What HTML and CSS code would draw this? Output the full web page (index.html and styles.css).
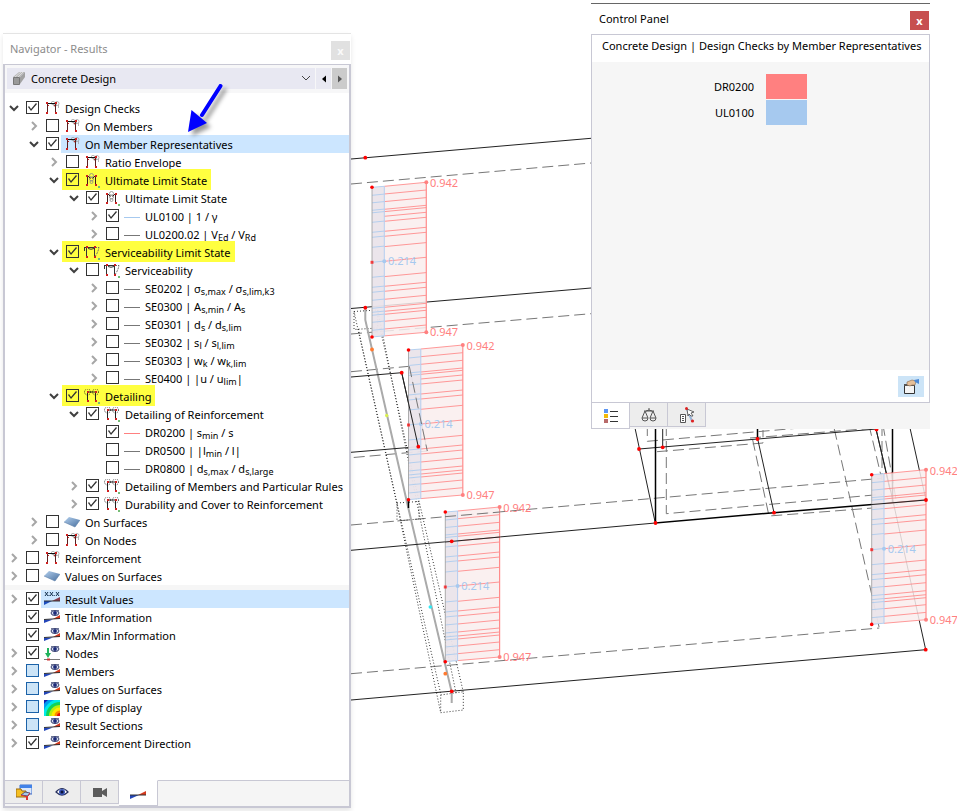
FILE: index.html
```html
<!DOCTYPE html>
<html lang="en">
<head>
<meta charset="utf-8">
<title>Concrete Design - Results</title>
<link rel="stylesheet" href="styles.css">
</head>
<body>
<svg class="defs" aria-hidden="true">
  <defs>
    <linearGradient id="g-surf" x1="0" y1="0" x2="1" y2="1"><stop offset="0" stop-color="#b4d0ee"/><stop offset="1" stop-color="#48709f"/></linearGradient>
    <symbol id="down" viewBox="0 0 12 12"><path d="M2 4l4 4 4-4" fill="none" stroke="#404040" stroke-width="2"/></symbol>
    <symbol id="right" viewBox="0 0 12 12"><path d="M4 2l4 4-4 4" fill="none" stroke="#a6a6a6" stroke-width="2"/></symbol>
    <symbol id="frame" viewBox="0 0 16 16">
      <g fill="none" stroke="#999" stroke-width=".7"><circle cx="9" cy="2" r="1.700"/><circle cx="13" cy="2.500" r="2"/><circle cx="11" cy="4" r="1.500"/><path d="M14.500 4v3"/></g>
      <path d="M3.500 13V2.500M11.500 13V2.500" fill="none" stroke="#5a2020"/><path d="M3 2.500h9" stroke="#111"/>
      <path d="M2 1h2v2H2zM11 1h2v2h-2zM2 11h2v2H2zM11 11h2v2h-2zM4 4h1v1H4zM10 4h1v1h-1z" fill="#cf2020"/>
    </symbol>
    <symbol id="uls" viewBox="0 0 16 16">
      <g fill="none" stroke="#888" stroke-width=".8"><circle cx="7.500" cy="2.500" r="2"/><circle cx="7.500" cy="6" r="2"/><circle cx="7.500" cy="9" r="1.500"/></g>
      <path d="M3.500 13V2.500l3 3M11.500 13V2.500l-3 3" fill="none" stroke="#3a1a1a"/>
      <path d="M2 2h2v2H2zM11 2h2v2h-2zM2 11h2v2H2zM11 11h2v2h-2z" fill="#cf2020"/><path d="M14 13h2v2h-2z" fill="#75bd75"/>
    </symbol>
    <symbol id="sls" viewBox="0 0 16 16">
      <path d="M0 2.500h11M2.500 3v10M10.500 3v10M.5 6V2M4 3.500q3 1.500 6 0" fill="none" stroke="#333"/><path d="M11 2.500h4q-1 5-4 9" fill="none" stroke="#666" stroke-dasharray="2 1"/>
      <path d="M2 1h2v2H2zM10 1h2v2h-2zM2 11h2v2H2zM10 11h2v2h-2z" fill="#cf2020"/><path d="M14 13h2v2h-2z" fill="#75bd75"/>
    </symbol>
    <symbol id="det" viewBox="0 0 16 16">
      <g fill="none" stroke="#111" stroke-width=".9" stroke-dasharray="1 1.200"><circle cx="3.500" cy="3" r="3"/><circle cx="11.500" cy="3" r="3"/></g>
      <path d="M3.500 13V3h8v10" fill="none" stroke="#222"/><path d="M3 2h2v2H3zM11 2h2v2h-2zM3 11h2v2H3zM11 11h2v2h-2z" fill="#cf2020"/><path d="M14 13h2v2h-2z" fill="#75bd75"/>
    </symbol>
    <symbol id="surf" viewBox="0 0 16 16"><path d="M0 7l5-5 11 3-5 7z" fill="url(#g-surf)"/><path d="M0 7l11 5 5-7" fill="none" stroke="#5d7fa8" stroke-width=".6"/></symbol>
    <symbol id="ramp" viewBox="0 0 16 16"><path d="M0 10h9L0 14z" fill="#2446b8"/><path d="M8 10l8-4v4z" fill="#d63a1e"/><path d="M0 10h16" stroke="#333"/></symbol>
    <symbol id="values" viewBox="0 0 16 16"><path d="M0 9h8L0 13z" fill="#1d4ec0"/><path d="M8 9l8-4v4z" fill="#8b3b4b"/><path d="M0 9h16" stroke="#333"/><path d="M1 0l3 4M4 0L1 4M6 0l3 4M9 0L6 4M12 0l3 4M15 0l-3 4" stroke="#15314f" stroke-width="1"/><path d="M4.500 3h1v1h-1zM9.700 3h1v1h-1z" fill="#15314f"/></symbol>
    <symbol id="eye-s" viewBox="0 0 10 8"><ellipse cx="5" cy="4" rx="4" ry="2.500" fill="#d5dbec" stroke="#313b6b"/><circle cx="5" cy="4" r="1.900" fill="#1d2b78"/><path d="M1 1.500q4-2.300 8 0" fill="none" stroke="#313b6b" stroke-width=".8"/></symbol>
    <symbol id="result" viewBox="0 0 16 16"><path d="M0 9.500h9L0 13z" fill="#2446b8"/><path d="M9 9l7-4v4z" fill="#d63a1e"/><path d="M0 9.500l16-1" stroke="#333"/><use href="#eye-s" x="6" y="-1" width="10" height="8"/></symbol>
    <symbol id="nodes" viewBox="0 0 16 16"><path d="M4 2v7" stroke="#20b35c" stroke-width="2"/><path d="M1 7l3 5 3-5z" fill="#20b35c"/><path d="M0 13.500h16" stroke="#777"/><path d="M3 12.500h3v2H3z" fill="#c33"/><use href="#eye-s" x="6" y="-1" width="10" height="8"/></symbol>
    <symbol id="rainbow" viewBox="0 0 16 16"><path d="M0 0h16v16H0z" fill="#1020b0"/><circle cx="16" cy="16" r="20" fill="#009cf0"/><circle cx="16" cy="16" r="17" fill="#00eaea"/><circle cx="16" cy="16" r="14" fill="#10d35a"/><circle cx="16" cy="16" r="11" fill="#b3ee10"/><circle cx="16" cy="16" r="8.500" fill="#ffe800"/><circle cx="16" cy="16" r="5.500" fill="#ff8a00"/><circle cx="16" cy="16" r="3" fill="#e01010"/></symbol>
    <g id="diagram">
      <path d="M0 5L54.300 0V150L0 154.700z" fill="#f9eded" fill-opacity=".85"/>
      <path d="M0 5L12.300 4V153.600L0 154.700z" fill="#e4dfe8" fill-opacity=".7"/>
      <path d="M12.300 4L54.300 0m-42 11.700l42-4m-42 11.600l42-4m-42 11.700l42-4m-42 6.300l42-4m-42 8.700l42-4m-42 9l42-4m-42 14l42-4m-42 9l42-4m-42 14.300l42-4m-42 18.700l42-4m-42 19.300l42-4m-42 13.700l42-4m-42 9l42-4m-42 12l42-4m-42 12l42-4m-42 8l42-4m-42 7l42-4m-42 11l42-4m-42 11.700l42-4" fill="none" stroke="#ff8080" stroke-width=".8"/>
      <path d="M12.300 153.600l42-3.600" stroke="#ff8080" stroke-width=".8"/>
      <path d="M0 13l12.300-1.200M0 20.500l12.300-1.200M0 28l12.300-1.200M0 30.500l12.300-1.200M0 40l12.300-1.200M0 50l12.300-1.200M0 55l12.300-1.200M0 65l12.300-1.200M0 80l12.300-1.200M0 95l12.300-1.200M0 105l12.300-1.200M0 110l12.300-1.200M0 118l12.300-1.200M0 126l12.300-1.200M0 130l12.300-1.200M0 133l12.300-1.200M0 140l12.300-1.200M0 148l12.300-1.200M0 154.700l12.300-1.200M0 5l12.300-1" stroke="#a6c9ef" stroke-width=".8" fill="none"/>
      <path d="M0 5v150" stroke="#999" stroke-width=".8"/><path d="M12.300 4v150" stroke="#b4cdf0"/><path d="M54.300 0v150" stroke="#ff8c8c" stroke-width="1.200"/>
      <g fill="#ff8080"><circle cx="54.300" cy="0" r="2"/><circle cx="54.300" cy="150" r="2"/><text x="58" y="5">0.942</text><text x="58" y="154">0.947</text></g>
      <g fill="#a6c9ef"><circle cx="12.300" cy="79" r="2"/><text x="16" y="83">0.214</text></g>
      <g fill="#f00"><circle cx="0" cy="5" r="1.800"/><circle cx="0" cy="154.700" r="1.800"/><path d="M-1.500 78.500h3v3h-3z" opacity=".7"/></g>
    </g>
  </defs>
</svg>

<svg class="scene" viewBox="0 0 957 811" preserveAspectRatio="xMinYMin meet" role="img" aria-label="Structural model with design check diagrams">
  <g class="dashed">
    <path d="M351 184L591 163M351 334L591 313.700M351 371.700L409.300 366.300L427.300 451L351 457.700M351 525L881.700 478.300M351 673.700L879.300 628"/>
    <path d="M647.300 425V441.300L800 428M657 451.700L763 443V430M666.300 425V513.700L881.700 494.300M752.700 440L769 516L876.700 507.700M834.300 429L879.300 628M869 425L882 480M883 425L897 505M882 425V478M750 438L876 428"/>
  </g>
  <g class="dotted">
    <path d="M354 311.500L377.700 310V328L354 329.500zM397 503L419 501.500V519L397 521zM440.700 695L463.300 691.700V710L440.700 712.700z"/>
    <path d="M354 311.500L396 500L440.700 712.700M358.300 329L397 503L441 695M377.700 310L417 503L456 693M380 328L419 501L463.300 692"/>
  </g>
  <path class="axis" d="M365.300 308V320L408.300 508L451.700 692V703"/>
  <g class="solid">
    <path d="M351 159L591 138.300M351 308.500L591 288M351 377L401.700 372.700L418.300 446.700L351 452.300M351 550.300L655.300 523M351 700L925.700 649.700"/>
    <path d="M635 428L655.300 523M639 449L876.700 429M662.700 428V447M757.700 439L774 512.700M910 428L926 500M876 429L893 501L925.700 649.700M876 429L890 490"/>
    <path class="heavy" d="M655.500 428V523L774 512.700L926 500M757.500 428V439M892.500 428V502M408.500 498V508"/>
  </g>
  <g class="diagrams">
    <use href="#diagram" x="372" y="182.300"/><use href="#diagram" x="408.500" y="345"/><use href="#diagram" x="445.300" y="507"/><use href="#diagram" x="871.700" y="469.700"/>
  </g>
  <path class="solid" d="M445 542L500 537M871 504.600L926 500M401.700 372.700L418.300 446.700"/>
  <path class="dashed" d="M409.300 366.300L427.300 451M445 516.700L500 512"/>
  <g fill="#f00">
    <circle cx="365.300" cy="157.700" r="1.900"/><circle cx="365.300" cy="307.700" r="1.900"/><circle cx="401.700" cy="372.700" r="1.900"/><circle cx="418.300" cy="446.700" r="1.900"/><circle cx="451.700" cy="541.300" r="1.900"/><circle cx="451.700" cy="691.300" r="1.900"/><circle cx="639" cy="449" r="1.900"/><circle cx="662.700" cy="447.300" r="1.900"/><circle cx="757.500" cy="439" r="1.900"/><circle cx="876.500" cy="429.500" r="1.900"/><circle cx="655.500" cy="523" r="1.900"/><circle cx="774" cy="512.700" r="1.900"/><circle cx="926" cy="500" r="1.900"/><circle cx="925.700" cy="649.700" r="1.900"/>
  </g>
  <circle cx="372" cy="349.500" r="1.900" fill="#ff7a30"/><circle cx="386.700" cy="415.500" r="1.700" fill="#d8ee50"/><circle cx="430.300" cy="607" r="1.800" fill="#30e8f4"/><circle cx="445.300" cy="673.700" r="1.900" fill="#ff7a30"/>
</svg>

<main class="desktop">
<section class="navigator">
  <header class="titlebar muted"><h2>Navigator - Results</h2><button class="close" disabled aria-label="Close navigator">x</button></header>
  <div class="nav-body">
    <div class="toolbar">
      <div class="picker">
        <svg class="icon" viewBox="0 0 16 16"><path d="M2 6l6-5h6L9 6z" fill="#b9b9b9"/><path d="M9 6l5-5v5l-5 7z" fill="#a2a2a2"/><path d="M2.500 6.500h6v7h-6z" fill="#999" stroke="#777"/><path d="M4 6l6-5M7 6l5-5" stroke="#e4e4e4" stroke-width=".8"/></svg>
        <select aria-label="Result category"><option>Concrete Design</option></select>
        <svg class="caret" viewBox="0 0 12 12"><path d="M2 4l4 4 4-4" fill="none" stroke="#444"/></svg>
      </div>
      <button class="step" aria-label="Previous"><svg viewBox="0 0 12 12"><path d="M8 2.500v7L4 6z"/></svg></button>
      <button class="step next" aria-label="Next"><svg viewBox="0 0 12 12"><path d="M4 2.500v7L8 6z" fill="#555"/></svg></button>
    </div>
    <ul class="tree">
      <li><div class="row"><button class="twist" aria-label="Collapse"><svg><use href="#down"/></svg></button><label><input type="checkbox" checked><span class="tag"><svg class="icon"><use href="#frame"/></svg>Design Checks</span></label></div>
        <ul>
          <li><div class="row"><button class="twist" aria-label="Expand"><svg><use href="#right"/></svg></button><label><input type="checkbox"><span class="tag"><svg class="icon"><use href="#frame"/></svg>On Members</span></label></div></li>
          <li><div class="row selected"><button class="twist" aria-label="Collapse"><svg><use href="#down"/></svg></button><label><input type="checkbox" checked><span class="tag"><svg class="icon"><use href="#frame"/></svg>On Member Representatives</span></label></div>
            <ul>
              <li><div class="row"><button class="twist" aria-label="Expand"><svg><use href="#right"/></svg></button><label><input type="checkbox"><span class="tag"><svg class="icon"><use href="#frame"/></svg>Ratio Envelope</span></label></div></li>
              <li><div class="row marked"><button class="twist" aria-label="Collapse"><svg><use href="#down"/></svg></button><label><input type="checkbox" checked><span class="tag"><svg class="icon"><use href="#uls"/></svg>Ultimate Limit State</span></label></div>
                <ul>
                  <li><div class="row"><button class="twist" aria-label="Collapse"><svg><use href="#down"/></svg></button><label><input type="checkbox" checked><span class="tag"><svg class="icon"><use href="#uls"/></svg>Ultimate Limit State</span></label></div>
                    <ul>
                      <li><div class="row"><button class="twist" aria-label="Expand"><svg><use href="#right"/></svg></button><label><input type="checkbox" checked><span class="tag"><i class="line blue"></i><span>UL0100 | 1 / γ</span></span></label></div></li>
                      <li><div class="row"><button class="twist" aria-label="Expand"><svg><use href="#right"/></svg></button><label><input type="checkbox"><span class="tag"><i class="line"></i><span>UL0200.02 | V<sub>Ed</sub> / V<sub>Rd</sub></span></span></label></div></li>
                    </ul></li>
                </ul></li>
              <li><div class="row marked"><button class="twist" aria-label="Collapse"><svg><use href="#down"/></svg></button><label><input type="checkbox" checked><span class="tag"><svg class="icon"><use href="#sls"/></svg>Serviceability Limit State</span></label></div>
                <ul>
                  <li><div class="row"><button class="twist" aria-label="Collapse"><svg><use href="#down"/></svg></button><label><input type="checkbox"><span class="tag"><svg class="icon"><use href="#sls"/></svg>Serviceability</span></label></div>
                    <ul>
                      <li><div class="row"><button class="twist" aria-label="Expand"><svg><use href="#right"/></svg></button><label><input type="checkbox"><span class="tag"><i class="line"></i><span>SE0202 | σ<sub>s,max</sub> / σ<sub>s,lim,k3</sub></span></span></label></div></li>
                      <li><div class="row"><button class="twist" aria-label="Expand"><svg><use href="#right"/></svg></button><label><input type="checkbox"><span class="tag"><i class="line"></i><span>SE0300 | A<sub>s,min</sub> / A<sub>s</sub></span></span></label></div></li>
                      <li><div class="row"><button class="twist" aria-label="Expand"><svg><use href="#right"/></svg></button><label><input type="checkbox"><span class="tag"><i class="line"></i><span>SE0301 | d<sub>s</sub> / d<sub>s,lim</sub></span></span></label></div></li>
                      <li><div class="row"><button class="twist" aria-label="Expand"><svg><use href="#right"/></svg></button><label><input type="checkbox"><span class="tag"><i class="line"></i><span>SE0302 | s<sub>l</sub> / s<sub>l,lim</sub></span></span></label></div></li>
                      <li><div class="row"><button class="twist" aria-label="Expand"><svg><use href="#right"/></svg></button><label><input type="checkbox"><span class="tag"><i class="line"></i><span>SE0303 | w<sub>k</sub> / w<sub>k,lim</sub></span></span></label></div></li>
                      <li><div class="row"><button class="twist" aria-label="Expand"><svg><use href="#right"/></svg></button><label><input type="checkbox"><span class="tag"><i class="line"></i><span>SE0400 | |u / u<sub>lim</sub>|</span></span></label></div></li>
                    </ul></li>
                </ul></li>
              <li><div class="row marked"><button class="twist" aria-label="Collapse"><svg><use href="#down"/></svg></button><label><input type="checkbox" checked><span class="tag"><svg class="icon"><use href="#det"/></svg>Detailing</span></label></div>
                <ul>
                  <li><div class="row"><button class="twist" aria-label="Collapse"><svg><use href="#down"/></svg></button><label><input type="checkbox" checked><span class="tag"><svg class="icon"><use href="#det"/></svg>Detailing of Reinforcement</span></label></div>
                    <ul>
                      <li><div class="row leaf"><label><input type="checkbox" checked><span class="tag"><i class="line red"></i><span>DR0200 | s<sub>min</sub> / s</span></span></label></div></li>
                      <li><div class="row leaf"><label><input type="checkbox"><span class="tag"><i class="line"></i><span>DR0500 | |l<sub>min</sub> / l|</span></span></label></div></li>
                      <li><div class="row leaf"><label><input type="checkbox"><span class="tag"><i class="line"></i><span>DR0800 | d<sub>s,max</sub> / d<sub>s,large</sub></span></span></label></div></li>
                    </ul></li>
                  <li><div class="row"><button class="twist" aria-label="Expand"><svg><use href="#right"/></svg></button><label><input type="checkbox" checked><span class="tag"><svg class="icon"><use href="#det"/></svg>Detailing of Members and Particular Rules</span></label></div></li>
                  <li><div class="row"><button class="twist" aria-label="Expand"><svg><use href="#right"/></svg></button><label><input type="checkbox" checked><span class="tag"><svg class="icon"><use href="#det"/></svg>Durability and Cover to Reinforcement</span></label></div></li>
                </ul></li>
            </ul></li>
          <li><div class="row"><button class="twist" aria-label="Expand"><svg><use href="#right"/></svg></button><label><input type="checkbox"><span class="tag"><svg class="icon"><use href="#surf"/></svg>On Surfaces</span></label></div></li>
          <li><div class="row"><button class="twist" aria-label="Expand"><svg><use href="#right"/></svg></button><label><input type="checkbox"><span class="tag"><svg class="icon"><use href="#frame"/></svg>On Nodes</span></label></div></li>
        </ul></li>
      <li><div class="row"><button class="twist" aria-label="Expand"><svg><use href="#right"/></svg></button><label><input type="checkbox"><span class="tag"><svg class="icon"><use href="#frame"/></svg>Reinforcement</span></label></div></li>
      <li><div class="row"><button class="twist" aria-label="Expand"><svg><use href="#right"/></svg></button><label><input type="checkbox"><span class="tag"><svg class="icon"><use href="#surf"/></svg>Values on Surfaces</span></label></div></li>
    </ul>
    <ul class="tree display">
      <li><div class="row selected"><button class="twist" aria-label="Expand"><svg><use href="#right"/></svg></button><label><input type="checkbox" checked><span class="tag"><svg class="icon"><use href="#values"/></svg>Result Values</span></label></div></li>
      <li><div class="row leaf"><label><input type="checkbox" checked><span class="tag"><svg class="icon"><use href="#result"/></svg>Title Information</span></label></div></li>
      <li><div class="row leaf"><label><input type="checkbox" checked><span class="tag"><svg class="icon"><use href="#result"/></svg>Max/Min Information</span></label></div></li>
      <li><div class="row"><button class="twist" aria-label="Expand"><svg><use href="#right"/></svg></button><label><input type="checkbox" checked><span class="tag"><svg class="icon"><use href="#nodes"/></svg>Nodes</span></label></div></li>
      <li><div class="row"><button class="twist" aria-label="Expand"><svg><use href="#right"/></svg></button><label><input type="checkbox" class="partial"><span class="tag"><svg class="icon"><use href="#result"/></svg>Members</span></label></div></li>
      <li><div class="row"><button class="twist" aria-label="Expand"><svg><use href="#right"/></svg></button><label><input type="checkbox" class="partial"><span class="tag"><svg class="icon"><use href="#result"/></svg>Values on Surfaces</span></label></div></li>
      <li><div class="row"><button class="twist" aria-label="Expand"><svg><use href="#right"/></svg></button><label><input type="checkbox" class="partial"><span class="tag"><svg class="icon"><use href="#rainbow"/></svg>Type of display</span></label></div></li>
      <li><div class="row"><button class="twist" aria-label="Expand"><svg><use href="#right"/></svg></button><label><input type="checkbox" class="partial"><span class="tag"><svg class="icon"><use href="#result"/></svg>Result Sections</span></label></div></li>
      <li><div class="row"><button class="twist" aria-label="Expand"><svg><use href="#right"/></svg></button><label><input type="checkbox" checked><span class="tag"><svg class="icon"><use href="#result"/></svg>Reinforcement Direction</span></label></div></li>
    </ul>
    <nav class="tabs">
      <button class="tab" aria-label="Data"><svg class="icon" viewBox="0 0 16 16"><path d="M4 1h12v9H4z" fill="#dbe8fb" stroke="#3c70cf"/><path d="M4 1h12v3H4z" fill="#4282e8"/><path d="M0 5h5l1 2h4v6H0z" fill="#f5bf22" stroke="#9b6a11"/><path d="M5 11l4-3 5 1-2 3z" fill="#a9c9e8" stroke="#557"/><path d="M5 11l6 2 3-4" fill="none" stroke="#d33"/><path d="M10 12h2v4h-2z" fill="#d33"/></svg></button>
      <button class="tab" aria-label="Display"><svg class="icon" viewBox="0 0 16 16"><path d="M2 8q6-7 12 0-6 6-12 0z" fill="#fff" stroke="#28315e" stroke-width="1.200"/><circle cx="8" cy="8" r="3" fill="#3a56b8"/><circle cx="8" cy="8" r="1.500" fill="#0d1438"/></svg></button>
      <button class="tab" aria-label="Views"><svg class="icon" viewBox="0 0 16 16"><path d="M1 4h9v9H1zM10 7l5-3v9l-5-3z" fill="#5c5c5c"/></svg></button>
      <button class="tab active" aria-label="Results"><svg class="icon" viewBox="0 0 16 16"><use href="#ramp"/></svg></button>
    </nav>
  </div>
  <svg class="pointer" viewBox="0 0 60 70"><path d="M40.500 6L22 35" fill="none" stroke="#00f" stroke-width="4" stroke-linecap="round"/><path d="M8 52l3.500-22L27 43z" fill="#00f"/></svg>
</section>

<section class="control">
  <header class="titlebar"><h2>Control Panel</h2><button class="close" aria-label="Close control panel">x</button></header>
  <div class="control-body">
    <h3>Concrete Design | Design Checks by Member Representatives</h3>
    <dl class="legend"><dt>DR0200</dt><dd class="red"></dd><dt>UL0100</dt><dd class="blue"></dd></dl>
    <div class="actions"><button aria-label="Panel options"><svg class="icon" viewBox="0 0 16 16"><path d="M1.500 5.500h10v9h-10z" fill="#f4f4f4" stroke="#333"/><path d="M1 5h11v2H1z" fill="#555"/><path d="M4 6V3l5-2 4 1-1 4H9L7 7z" fill="#e6bf98" stroke="#86674a" stroke-width=".6"/><path d="M11 1l5-1v5l-4-2z" fill="#4d8ad6"/></svg></button></div>
  </div>
  <nav class="tabs">
    <button class="tab active" aria-label="Legend"><svg class="icon" viewBox="0 0 16 16"><path d="M1 1h4v4H1z" fill="#5b95f5"/><path d="M1 6h4v4H1z" fill="#f2b90a"/><path d="M1 11h4v4H1z" fill="#b86a6a"/><path d="M7 3.500h8M7 8.500h8M7 13.500h8" stroke="#333"/></svg></button>
    <button class="tab" aria-label="Factors"><svg class="icon" viewBox="0 0 16 16"><path d="M8 1v3M3 4h10M5 4q3-2 6 0M4 4L1 11M4 4l3 7M12 4L9 11M12 4l3 7M1 11h6q0 3-3 3t-3-3zM9 11h6q0 3-3 3t-3-3z" fill="none" stroke="#555"/></svg></button>
    <button class="tab" aria-label="Filter"><svg class="icon" viewBox="0 0 16 16"><path d="M1.500 7.500h5v8h-5zM3 9.500h2M3 11.500h2M3 13.500h2" fill="#fff" stroke="#555"/><path d="M8 2l5 12" stroke="#9ab4d6" stroke-width="2"/><path d="M8 2l7 3-3 1 2 3-2 0-2-2-1 2z" fill="#fff" stroke="#444" stroke-width=".8"/><circle cx="7.500" cy="1.500" r="1.500" fill="#d22"/><circle cx="13.500" cy="14" r="1.600" fill="#d22"/></svg></button>
  </nav>
</section>
</main>
</body>
</html>
```
FILE: styles.css
```css
* { box-sizing: border-box; }
body { margin: 0; background: #fff; color: #000; font: 11px/18px "Noto Sans", "Open Sans", sans-serif; }
button, select, input { margin: 0; padding: 0; border: 0; font: inherit; color: inherit; background: none; }
ul, dl, dd, h2, h3 { margin: 0; padding: 0; list-style: none; font-weight: 400; }
svg { display: block; }
.defs { position: absolute; width: 0; height: 0; }
.scene { position: absolute; top: 0; left: 0; width: 100%; font-size: 11px; }
.solid { fill: none; stroke: #222; stroke-width: 1; }
.heavy { stroke: #000; stroke-width: 1.5; }
.dashed { fill: none; stroke: #777; stroke-width: 1; stroke-dasharray: 11 5; }
.dotted { fill: none; stroke: #333; stroke-width: 1; stroke-dasharray: 1 2; }
.axis { fill: none; stroke: #aaa; stroke-width: 2; }

.desktop { position: relative; display: flex; justify-content: space-between; align-items: flex-start; padding: 0 27px 4px 3px; }
.navigator { position: relative; width: 348px; margin-top: 33px; background: #fff; border-top: 1px solid #e4e4e4; box-shadow: 0 3px 5px rgba(0,0,0,.1); }
.control { width: 339px; margin-top: 3px; background: #f5f5f5; border-top: 1px solid #666; }
.titlebar { display: flex; align-items: center; justify-content: space-between; height: 30px; padding: 0 1px 0 8px; background: #fff; }
.titlebar h2 { font-size: 11px; }
.titlebar.muted { color: #8c8c8c; padding-left: 7px; }
.close { width: 19px; height: 19px; margin-top: 3px; background: #c75050; color: #fff; font-weight: 700; line-height: 16px; }
.close:disabled { background: #e1e1e1; color: #fafafa; }

.nav-body { border: solid #c8c8d4; border-width: 1px 2px 2px; }
.toolbar { display: flex; gap: 1px; padding: 3px 2px 4px; background: #f7f7f8; }
.picker { position: relative; flex: 1; display: flex; align-items: center; height: 21px; padding-left: 4px; background: #e8e8f2; }
.picker select { flex: 1; height: 21px; padding-left: 4px; appearance: none; outline: 0; }
.caret { position: absolute; right: 3px; top: 4px; width: 12px; height: 12px; pointer-events: none; }
.step { width: 15px; height: 21px; background: #e9e9f2; }
.step svg { width: 12px; height: 12px; margin: auto; }
.next { background: #cbcbcb; }

.tree { padding: 6px 0 0; }
.tree ul { margin-left: 20px; }
.display { padding: 0 0 28px; border-top: 5px solid #f6f6f6; }
.row { display: flex; height: 18px; padding-left: 3px; }
.twist { display: grid; place-items: center; width: 12px; height: 18px; margin-right: 6px; }
.twist svg { width: 12px; height: 12px; }
.leaf { padding-left: 21px; }
.row label { position: relative; isolation: isolate; flex: 1; display: flex; min-width: 0; white-space: nowrap; }
.tag { flex: 1; display: flex; align-items: center; gap: 5px; height: 18px; margin-left: 2px; padding: 2px 0 0 3px; line-height: 20px; }
.selected .tag { background: #cce6ff; }
.marked label { flex: none; }
.marked label::before { content: ""; position: absolute; z-index: -1; inset: -2px -4px -1px -4px; background: #ffff40; }
.icon { flex: none; width: 16px; height: 16px; }
.line { width: 16px; height: 1px; background: #777; }
.line.blue { background: #a6c9ef; }
.line.red { background: #ff8080; }
sub { font-size: 9px; line-height: 0; vertical-align: -2px; }
input[type="checkbox"] { appearance: none; flex: none; width: 13px; height: 13px; margin-top: 2px; border: 1px solid #333; background: #fff; }
.marked input[type="checkbox"] { background: none; }
input[type="checkbox"]:checked::before { content: ""; display: block; width: 11px; height: 11px; background: #333; clip-path: polygon(1px 5px, 2px 4px, 4px 7px, 9px 1px, 10px 2px, 4px 9px); }
input[type="checkbox"].partial { border-color: #1b62a8; background: #cce4f7; }

.tabs { display: flex; }
.tab { display: grid; place-items: center; width: 38px; height: 24px; background: #ededed; border: 1px solid #c8c8d4; border-left-width: 0; }
.tab.active { width: 39px; height: 26px; background: #fff; border-top-color: #fff; }
.nav-body .tabs { background: #f5f5f5; box-shadow: inset 0 1px #c8c8d4; }
.control .tab { border-top: 0; }
.control .tab.active { border-left-width: 1px; }
.pointer { position: absolute; left: 177px; top: 46px; width: 60px; height: 70px; filter: drop-shadow(4px 4px 2px rgba(0,0,0,.4)); pointer-events: none; }

.control-body { background: #fff; border: 1px solid #c8c8d4; }
.control h3 { padding: 2px 10px 7px; font-size: 11px; white-space: nowrap; }
.legend { display: grid; grid-template-columns: 162px 41px; gap: 1px 12px; align-content: start; align-items: center; min-height: 308px; padding-top: 12px; background: #f6f6f6; }
.legend dt { text-align: right; }
.legend dd { height: 25px; }
.legend .red { background: #ff8080; }
.legend .blue { background: #a6c9ef; }
.actions { display: flex; justify-content: flex-end; padding: 6px 5px 5px; }
.actions button { display: grid; place-items: center; width: 26px; height: 21px; background: #cce4f7; }
```
